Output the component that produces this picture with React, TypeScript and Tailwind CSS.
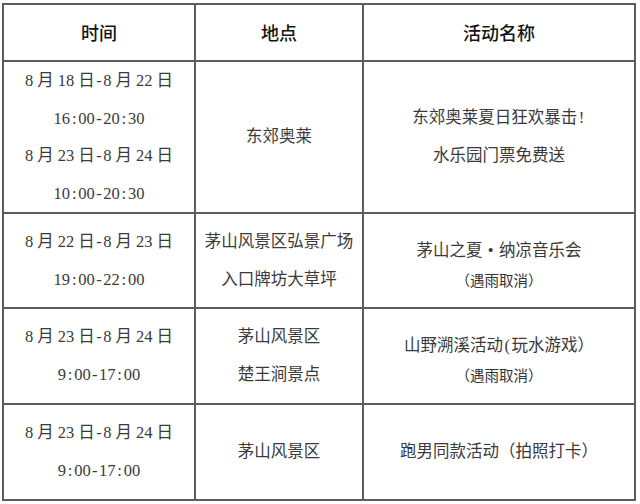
import React from "react";

function Txt({ s }: { s: string }) {
  const parts: React.ReactNode[] = [];
  Array.from(s).forEach((ch, i) => {
    if (ch === " ") {
      parts.push(<span key={i} className="inline-block w-[4px]" />);
    } else if (ch === ":" || ch === "-" || ch === "!" || ch === "(") {
      parts.push(
        <span key={i} className="inline-block w-[8.3px] text-center">
          {ch}
        </span>
      );
    } else if (ch === "•") {
      parts.push(
        <span key={i} className="inline-block w-[16.5px] text-center">
          {ch}
        </span>
      );
    } else {
      parts.push(ch);
    }
  });
  return <>{parts}</>;
}

const body =
  "font-['Liberation_Serif','Noto_Sans_CJK_SC',serif] text-[16.5px] text-[#3a3a3a] whitespace-nowrap";
const cell = "flex flex-col items-center justify-center border-r-2 border-b-2 border-[#5c5c5c]";
const head =
  "font-['Noto_Sans_CJK_SC',sans-serif] text-[18px] text-[#141414] font-medium";
const note = "font-['Noto_Sans_CJK_SC',sans-serif] text-[14.5px] leading-[20px] text-[#333]";

function Lines({ lines, lh = "leading-[38px]" }: { lines: string[]; lh?: string }) {
  return (
    <>
      {lines.map((l, i) => (
        <div key={i} className={lh}>
          <Txt s={l} />
        </div>
      ))}
    </>
  );
}

export default function App() {
  return (
    <div className="w-[640px] h-[504px] bg-white pt-[3px] pl-[2px]">
      <div className="w-[634px] border-t-2 border-l-2 border-[#5c5c5c] grid grid-cols-[192px_168px_272px] grid-rows-[57px_152px_95px_96px_96px]">
        <div className={cell}>
          <span className={head}>时间</span>
        </div>
        <div className={cell}>
          <span className={head}>地点</span>
        </div>
        <div className={cell}>
          <span className={head}>活动名称</span>
        </div>

        <div className={`${cell} ${body}`}>
          <Lines
            lh="leading-[37.5px]"
            lines={["8 月 18 日-8 月 22 日", "16:00-20:30", "8 月 23 日-8 月 24 日", "10:00-20:30"]}
          />
        </div>
        <div className={`${cell} ${body}`}>
          <Lines lines={["东郊奥莱"]} />
        </div>
        <div className={`${cell} ${body}`}>
          <Lines lines={["东郊奥莱夏日狂欢暴击!", "水乐园门票免费送"]} />
        </div>

        <div className={`${cell} ${body}`}>
          <Lines lines={["8 月 22 日-8 月 23 日", "19:00-22:00"]} />
        </div>
        <div className={`${cell} ${body}`}>
          <Lines lines={["茅山风景区弘景广场", "入口牌坊大草坪"]} />
        </div>
        <div className={`${cell} ${body}`}>
          <Lines lines={["茅山之夏•纳凉音乐会"]} />
          <div className={note}>（遇雨取消）</div>
        </div>

        <div className={`${cell} ${body}`}>
          <Lines lines={["8 月 23 日-8 月 24 日", "9:00-17:00"]} />
        </div>
        <div className={`${cell} ${body}`}>
          <Lines lines={["茅山风景区", "楚王涧景点"]} />
        </div>
        <div className={`${cell} ${body}`}>
          <Lines lines={["山野溯溪活动(玩水游戏）"]} />
          <div className={note}>（遇雨取消）</div>
        </div>

        <div className={`${cell} ${body}`}>
          <Lines lines={["8 月 23 日-8 月 24 日", "9:00-17:00"]} />
        </div>
        <div className={`${cell} ${body}`}>
          <Lines lines={["茅山风景区"]} />
        </div>
        <div className={`${cell} ${body}`}>
          <Lines lines={["跑男同款活动（拍照打卡）"]} />
        </div>
      </div>
    </div>
  );
}
